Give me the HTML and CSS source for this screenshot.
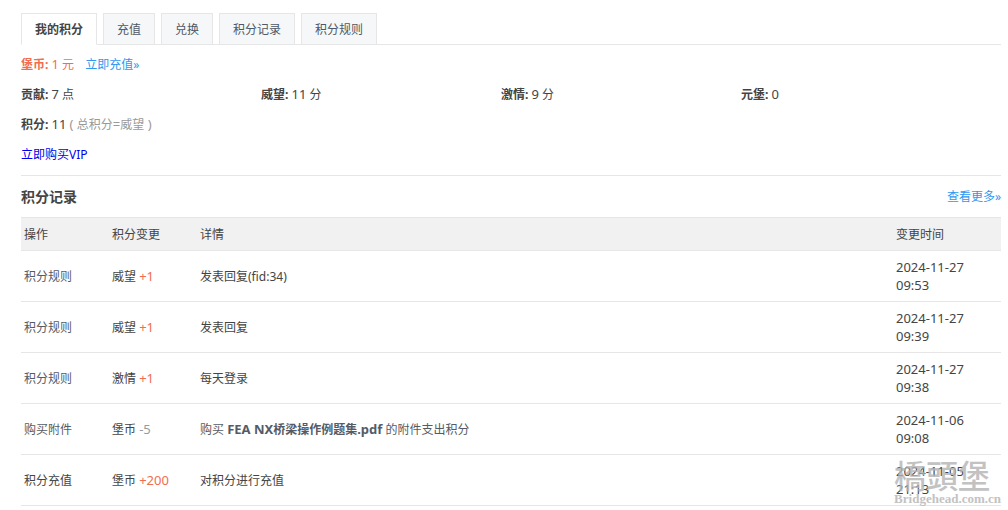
FILE: index.html
```html
<!DOCTYPE html>
<html lang="zh-CN">
<head>
<meta charset="utf-8">
<title>我的积分</title>
<link rel="stylesheet" href="styles.css">
</head>
<body>
<main class="page">
  <nav class="tabs">
    <a class="tab tab-active" href="#mine">我的积分</a>
    <a class="tab" href="#recharge">充值</a>
    <a class="tab" href="#exchange">兑换</a>
    <a class="tab" href="#log">积分记录</a>
    <a class="tab" href="#rules">积分规则</a>
  </nav>
  <ul class="credits">
    <li class="wide money"><b>堡币:</b> <span class="num">1</span> 元 <a class="link recharge" href="#recharge">立即充值»</a></li>
    <li><b>贡献:</b> <span class="num">7</span> 点</li>
    <li><b>威望:</b> <span class="num">11</span> 分</li>
    <li><b>激情:</b> <span class="num">9</span> 分</li>
    <li><b>元堡:</b> <span class="num">0</span></li>
    <li class="wide"><b>积分:</b> <span class="num">11</span> <span class="muted"><span class="num">( </span>总积分<span class="num">=</span>威望<span class="num"> )</span></span></li>
    <li class="wide"><a class="vip" href="#vip">立即购买VIP</a></li>
  </ul>
  <section class="log">
    <header class="log-head">
      <h2 class="log-title">积分记录</h2>
      <a class="link" href="#log">查看更多»</a>
    </header>
    <table class="log-table">
      <thead>
        <tr><th class="col-short" scope="col">操作</th><th class="col-short" scope="col">积分变更</th><th scope="col">详情</th><th class="col-time" scope="col">变更时间</th></tr>
      </thead>
      <tbody>
        <tr><td><a class="op" href="#rules">积分规则</a></td><td>威望 <span class="num plus">+1</span></td><td>发表回复(fid:34)</td><td class="time"><time>2024-11-27<br>09:53</time></td></tr>
        <tr><td><a class="op" href="#rules">积分规则</a></td><td>威望 <span class="num plus">+1</span></td><td>发表回复</td><td class="time"><time>2024-11-27<br>09:39</time></td></tr>
        <tr><td><a class="op" href="#rules">积分规则</a></td><td>激情 <span class="num plus">+1</span></td><td>每天登录</td><td class="time"><time>2024-11-27<br>09:38</time></td></tr>
        <tr><td><a class="op" href="#buy">购买附件</a></td><td>堡币 <span class="num muted">-5</span></td><td><a class="op" href="#file">购买 <b><span class="num">FEA NX</span>桥梁操作例题集<span class="num">.pdf</span></b> 的附件支出积分</a></td><td class="time"><time>2024-11-06<br>09:08</time></td></tr>
        <tr><td>积分充值</td><td>堡币 <span class="num plus">+200</span></td><td>对积分进行充值</td><td class="time"><time>2024-11-05<br>21:13</time></td></tr>
      </tbody>
    </table>
    <div class="watermark">
      <span class="mark-name">橋頭堡</span>
      <span class="mark-site">Bridgehead.com.cn</span>
    </div>
  </section>
</main>
</body>
</html>
```
FILE: styles.css
```css
* { box-sizing: border-box; }
body {
  margin: 0;
  background: #fff;
  color: #444;
  font: 12px/18px "Noto Sans", "Noto Sans CJK SC", sans-serif;
}
a { text-decoration: none; }
.page { padding: 13px 7px 0 21px; }
.num { font-size: 13px; line-height: 12px; }
.muted { color: #999; }
.plus { color: #f26c4f; }
.link { color: #2e98f0; }
.op { color: #555b66; }

.tabs {
  display: flex;
  gap: 6px;
  box-shadow: inset 0 -1px #e6e6e6;
}
.tab {
  height: 32px;
  padding: 0 13px;
  border: 1px solid #e6e6e6;
  background: #f5f7f9;
  color: #505866;
  line-height: 32px;
}
.tab-active {
  border-bottom-color: #fff;
  background: #fff;
  color: #444;
  font-weight: bold;
}

.credits {
  display: grid;
  grid-template-columns: repeat(4, 240px);
  margin: 0;
  padding: 5px 0;
  border-bottom: 1px solid #e6e6e6;
  list-style: none;
  line-height: 30px;
}
.credits li { height: 30px; }
.credits .wide { grid-column: 1 / -1; }
.money { color: #f26c4f; }
.recharge { margin-left: 8px; }
.vip { color: #0000f0; }

.log { position: relative; }
.log-head {
  display: flex;
  justify-content: space-between;
  align-items: center;
  height: 41px;
}
.log-title {
  margin: 0;
  font-size: 14px;
  line-height: 20px;
}
.log-table {
  width: 100%;
  border-top: 1px solid #e6e6e6;
  border-spacing: 0;
  table-layout: fixed;
}
.log-table th,
.log-table td {
  padding: 8px 3px 6px;
  border-bottom: 1px solid #e6e6e6;
  text-align: left;
  font-weight: normal;
  vertical-align: middle;
}
.log-table .time { padding: 7px 3px; }
.log-table th { background: #f1f1f1; }
.col-short { width: 88px; }
.col-time { width: 108px; }
.log-table time { display: block; font-size: 13px; }

.watermark {
  position: absolute;
  right: 0;
  bottom: 0;
  display: flex;
  flex-direction: column;
  color: #b4b4b4;
  opacity: 0.8;
  pointer-events: none;
}
.mark-name {
  font: 500 32px/36px "Noto Sans CJK TC", sans-serif;
}
.mark-site {
  font: bold 13px/14px "Liberation Serif", serif;
}
```
